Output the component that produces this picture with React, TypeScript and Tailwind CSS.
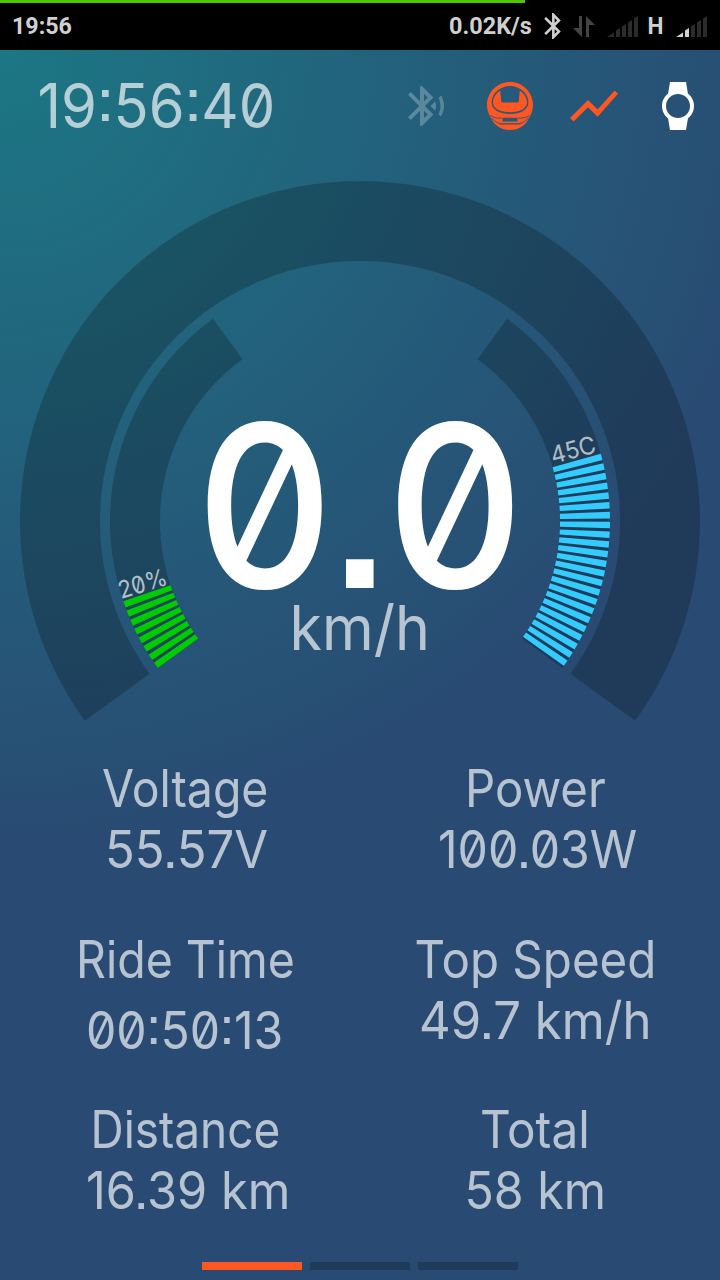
import React, { useLayoutEffect, useRef, useState } from 'react';

const STATS = [
  { label: 'Voltage', labelWidth: 166, value: '55.57V', valueWidth: 163, valueClass: 'ml-[2px]' },
  { label: 'Power', labelWidth: 141, value: '100.03W', valueWidth: 199, valueClass: 'ml-[5px]' },
  { label: 'Ride Time', labelWidth: 219, value: '00:50:13', valueWidth: 197, valueClass: 'mt-[10px]' },
  { label: 'Top Speed', labelWidth: 242, value: '49.7 km/h', valueWidth: 232, valueClass: '' },
  { label: 'Distance', labelWidth: 190, value: '16.39 km', valueWidth: 204, valueClass: 'ml-[6px]' },
  { label: 'Total', labelWidth: 110, value: '58 km', valueWidth: 142, valueClass: '' },
];

const CX = 360;
const CY = 521;

const point = (r: number, deg: number) => {
  const a = (deg * Math.PI) / 180;
  return `${(CX + r * Math.cos(a)).toFixed(2)} ${(CY + r * Math.sin(a)).toFixed(2)}`;
};

// ring segment between two radii, angles run clockwise from 3 o'clock
const band = (inner: number, outer: number, from: number, to: number) => {
  const large = to - from > 180 ? 1 : 0;
  return `M${point(outer, from)} A${outer} ${outer} 0 ${large} 1 ${point(outer, to)} L${point(inner, to)} A${inner} ${inner} 0 ${large} 0 ${point(inner, from)} Z`;
};

const ticks = (start: number, count: number) =>
  Array.from({ length: count }, (_, i) => band(200, 250, start + i * 2.25, start + i * 2.25 + 1.5)).join(' ');

// condenses or widens a line of text to the given width
const Fit: React.FC<{ width: number; className?: string; children: string }> = ({ width, className = '', children }) => {
  const ref = useRef<HTMLSpanElement>(null);
  const [scale, setScale] = useState(1);

  useLayoutEffect(() => {
    if (ref.current) setScale(width / ref.current.offsetWidth);
  }, [width, children]);

  return (
    <div className={`flex justify-center whitespace-nowrap ${className}`} style={{ width }}>
      <span ref={ref} className="shrink-0" style={{ transform: `scaleX(${scale})` }}>{children}</span>
    </div>
  );
};

const Signal: React.FC<{ active?: boolean }> = ({ active }) => (
  <svg className="w-[31px] h-[21px]" viewBox="0 0 31 21" fill="#2b2b2b">
    <path d="M0 21L7 16.5V21z" fill={active ? '#d0d0d0' : '#2b2b2b'} />
    <path d="M9 14.5l4-2.5v9H9z" fill={active ? '#d0d0d0' : '#2b2b2b'} />
    <path d="M15 10.500l4-2.500v13h-4zM21 6.500l4-2.500v17h-4zM27 2.500L31 0v21h-4z" />
  </svg>
);

const StatusBar = () => (
  <div className="h-[50px] shrink-0 bg-black text-[#d0d0d0] font-['Roboto',sans-serif] font-bold text-[24px] leading-none">
    <div className="h-[3px] w-[525px] bg-[#4cc800]"></div>
    <div className="h-[46px] flex items-center pl-3 pr-[13px]">
      <Fit width={60}>19:56</Fit>
      <Fit width={83} className="ml-auto">0.02K/s</Fit>
      <svg className="ml-3 w-[17px] h-[26px]" viewBox="5 2 12.71 20" fill="currentColor">
        <path d="M17.71 7.71L12 2h-1v7.59L6.41 5 5 6.41 10.59 12 5 17.59 6.41 19 11 14.41V22h1l5.71-5.71-4.3-4.29 4.3-4.29zM13 5.83l1.88 1.88L13 9.59V5.83zm1.88 10.46L13 18.17v-3.76l1.88 1.88z" />
      </svg>
      <svg className="ml-3 w-[22px] h-[21px]" viewBox="0 0 22 21" fill="#444444">
        <path d="M6 0h3v21L0 12h6zM13 0l9 9h-6v12h-3z" />
      </svg>
      <div className="ml-3"><Signal /></div>
      <Fit width={16} className="ml-[9px]">H</Fit>
      <div className="ml-[13px]"><Signal active /></div>
    </div>
  </div>
);

const Header = () => (
  <header className="h-[110px] flex items-center pl-[37px] pr-[18px]">
    <Fit width={238} className="pt-px text-[62px] leading-none text-white/67">19:56:40</Fit>
    <div className="ml-auto pt-[2px] flex items-center gap-9">
      <svg className="size-12 text-white/25" viewBox="0 0 24 24" fill="currentColor">
        <path d="M14.24 12.01l2.32 2.32c.28-.72.44-1.51.44-2.33 0-.82-.16-1.59-.43-2.31l-2.33 2.32zm5.29-5.3l-1.26 1.26c.63 1.21.98 2.57.98 4.02s-.36 2.82-.98 4.02l1.2 1.2c.97-1.54 1.54-3.36 1.54-5.31-.01-1.89-.55-3.67-1.48-5.19zm-3.82 1L10 2H9v7.59L4.41 5 3 6.41 8.59 12 3 17.59 4.41 19 9 14.41V22h1l5.71-5.71-4.3-4.29 4.3-4.29zM11 5.83l1.88 1.88L11 9.59V5.83zm1.88 10.46L11 18.17v-3.76l1.88 1.88z" />
      </svg>
      <svg className="size-12" viewBox="0 0 48 48">
        <path fill="#ff5722" d="M24 0C11.300 0 1 10.300 1 23c0 4.500 1.300 8.700 3.700 12.200C7.600 43 15 48 24 48s16.400-5 19.300-12.800C45.700 31.700 47 27.500 47 23 47 10.300 36.700 0 24 0z" />
        <path fill="#255a7b" d="M24 4C13.600 4 5.600 12 5.600 20.500c0 7 8 11.500 18.400 11.500s18.400-4.500 18.400-11.500C42.400 12 34.400 4 24 4z" />
        <path fill="#ff5722" d="M14.200 8.500l1 10.700c.1.900.6 1.400 1.400 1.400h14.800c.8 0 1.300-.5 1.400-1.400l1-10.700c4.500 3 7.200 7.500 7.200 12 0 6-7.500 9.800-17 9.800S7 26.500 7 20.500c0-4.500 2.700-9 7.200-12z" />
        <path fill="none" stroke="#255a7b" strokeWidth="0.9" d="M4.500 33.500c3 2.200 6.500 2.700 11.500 2.700M43.500 33.500c-3 2.200-6.500 2.700-11.500 2.700M5.500 36c2.500 2.800 4.500 4.300 8.500 5.500M42.500 36c-2.500 2.800-4.500 4.300-8.500 5.500" />
        <path fill="#255a7b" d="M16.500 35.700h15v3.800h-15zM13.500 41.200h21v1.300h-21z" />
      </svg>
      <svg className="size-12 text-[#ff5722]" viewBox="2 2 20 20" fill="currentColor">
        <path d="M3.500 18.490l6-6.010 4 4L22 6.920l-1.410-1.410-7.090 7.970-4-4L2 16.990z" />
      </svg>
      <svg className="size-12 text-white" viewBox="0 0 24 24" fill="currentColor">
        <path d="M20 12c0-2.540-1.190-4.810-3.040-6.270L16 0H8l-.95 5.730C5.190 7.190 4 9.450 4 12s1.190 4.810 3.050 6.270L8 24h8l.96-5.730C18.810 16.810 20 14.540 20 12zM6 12c0-3.310 2.690-6 6-6s6 2.690 6 6-2.690 6-6 6-6-2.690-6-6z" />
      </svg>
    </div>
  </header>
);

const Gauge = () => (
  <section className="relative h-[590px]">
    <svg className="w-full h-full" viewBox="0 160 720 590">
      <g fill="#000" fillOpacity="0.21">
        <path d={band(260, 340, 144, 396)} />
        <path d={band(200, 250, 144, 234)} />
        <path d={band(200, 250, -54, 36)} />
      </g>
      <path d={ticks(144, 8)} fill="#00cc00" />
      <path d={ticks(-15.6, 23)} fill="#33ccff" />
      <g fill="#fff" fillOpacity="0.67" fontSize="24">
        <text transform="translate(121 599) rotate(-17)" textLength="50" lengthAdjust="spacingAndGlyphs">20%</text>
        <text transform="translate(553 464) rotate(-15)" textLength="46" lengthAdjust="spacingAndGlyphs">45C</text>
      </g>
    </svg>
    <div className="absolute inset-0 flex flex-col items-center pt-[244px]">
      <Fit width={328} className="text-[227px] leading-[204px] font-medium text-white">0.0</Fit>
      <Fit width={140} className="-mt-[11px] text-[62px] leading-none text-white/67">km/h</Fit>
    </div>
  </section>
);

const Stats = () => (
  <section className="grid grid-cols-2 auto-rows-[122px] gap-y-[48.5px] px-[10px] pt-2 text-[52px] leading-[61px] text-white/67">
    {STATS.map((stat) => (
      <div key={stat.label} className="flex flex-col items-center">
        <Fit width={stat.labelWidth}>{stat.label}</Fit>
        <Fit width={stat.valueWidth} className={stat.valueClass}>{stat.value}</Fit>
      </div>
    ))}
  </section>
);

const App: React.FC = () => {
  return (
    <div className="w-[720px] h-[1280px] overflow-hidden flex flex-col">
      <StatusBar />
      <main className="flex-1 flex flex-col font-['Inter',sans-serif] [font-feature-settings:'zero','ss07'] bg-[radial-gradient(circle_790px_at_0_0,#1c7784,#294b73)]">
        <Header />
        <Gauge />
        <Stats />
        <div className="mt-auto mb-[10px] flex justify-center gap-2">
          <div className="w-[100px] h-2 bg-[#ff5722]"></div>
          <div className="w-[100px] h-2 bg-black/21"></div>
          <div className="w-[100px] h-2 bg-black/21"></div>
        </div>
      </main>
    </div>
  );
};

export default App;
